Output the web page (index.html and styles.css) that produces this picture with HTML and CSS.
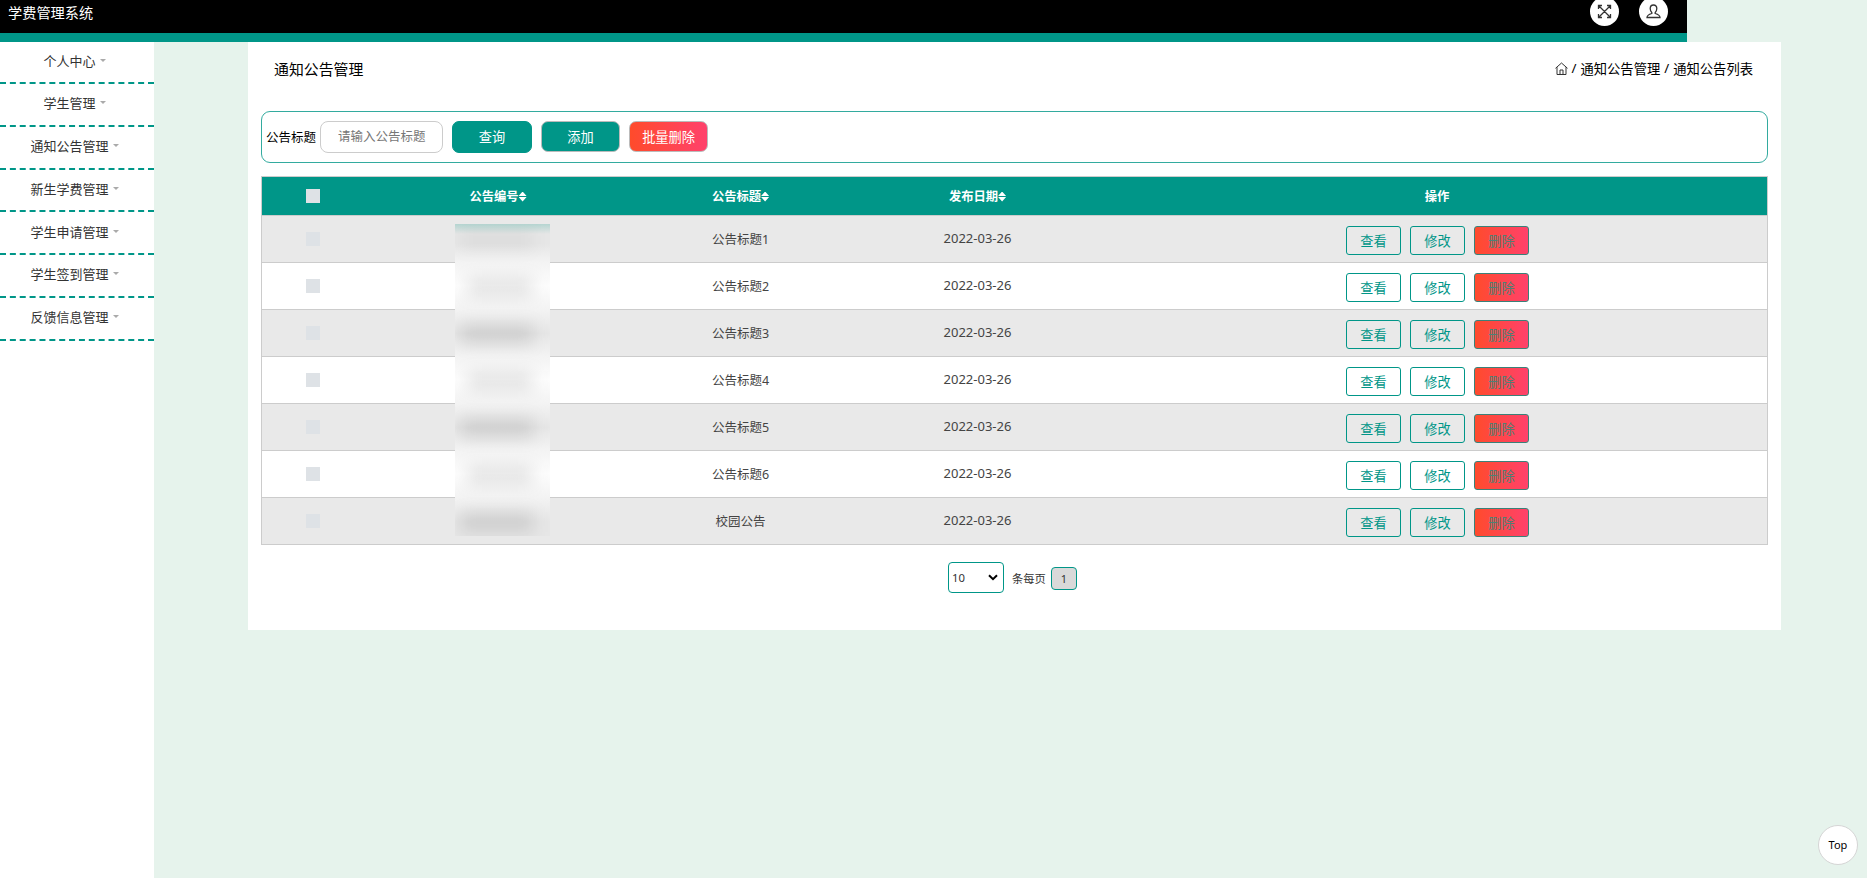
FILE: index.html
```html
<!DOCTYPE html>
<html lang="zh-CN">
<head>
    <meta charset="UTF-8">
    <meta name="viewport" content="width=device-width, initial-scale=1.0">
    <title>学费管理系统</title>
    <link rel="stylesheet" href="styles.css">
</head>
<body>
    <header class="navbar">
        <div class="brand">学费管理系统</div>
        <div class="nav-icons">
            <a class="nav-icon">
                <svg width="15" height="15" viewBox="0 0 15 15"><path d="M2 2l11 11M13 2L2 13M1.500 5V1.500H5M10 1.500h3.500V5M13.500 10v3.500H10M5 13.500H1.500V10"/></svg>
            </a>
            <a class="nav-icon">
                <svg width="15" height="15" viewBox="0 0 15 15"><path d="M7.500 1c-2.200 0-3.300 1.500-3.300 3.600 0 1.600.6 3 1.600 3.900v1C3 10.300 1 11 1 13.500h13c0-2.500-2-3.200-4.800-4v-1c1-.9 1.600-2.300 1.600-3.900C10.800 2.500 9.700 1 7.500 1z"/></svg>
            </a>
        </div>
    </header>

    <div class="wrapper">
        <nav class="sidebar">
            <a class="menu-item">个人中心<i class="caret"></i></a>
            <a class="menu-item">学生管理<i class="caret"></i></a>
            <a class="menu-item">通知公告管理<i class="caret"></i></a>
            <a class="menu-item">新生学费管理<i class="caret"></i></a>
            <a class="menu-item">学生申请管理<i class="caret"></i></a>
            <a class="menu-item">学生签到管理<i class="caret"></i></a>
            <a class="menu-item">反馈信息管理<i class="caret"></i></a>
        </nav>

        <main class="content">
            <div class="page-head">
                <h3>通知公告管理</h3>
                <div class="breadcrumb">
                    <svg class="home" width="13" height="13" viewBox="0 0 13 13"><path d="M.5 6.300L6.500 1l6 5.300M2 5.200v7.300h9V5.200M5 12.500V8h3v4.500"/></svg>
                    <span>/</span><span>通知公告管理</span><span>/</span><span>通知公告列表</span>
                </div>
            </div>

            <div class="search">
                <label for="title">公告标题</label>
                <input type="text" id="title" placeholder="请输入公告标题">
                <button class="btn btn-search">查询</button>
                <button class="btn btn-add">添加</button>
                <button class="btn btn-remove">批量删除</button>
            </div>

            <div class="table-box">
                <table>
                    <colgroup>
                        <col class="col-check"><col class="col-no"><col class="col-title"><col class="col-date"><col>
                    </colgroup>
                    <thead>
                        <tr>
                            <th><i class="check"></i></th>
                            <th>公告编号<i class="sort"></i></th>
                            <th>公告标题<i class="sort"></i></th>
                            <th>发布日期<i class="sort"></i></th>
                            <th>操作</th>
                        </tr>
                    </thead>
                    <tbody id="data-table"></tbody>
                </table>
                <div class="mask">
                    <i></i><i></i><i></i><i></i><i></i><i></i><i></i>
                </div>
            </div>

            <div class="pager">
                <div class="page-size">10<svg width="10" height="7" viewBox="0 0 10 7"><path d="M1 1.200l4 4 4-4"/></svg></div>
                <span>条每页</span>
                <button class="page-no">1</button>
            </div>
        </main>
    </div>

    <a class="to-top">Top</a>

    <script>
        const list = ["公告标题1", "公告标题2", "公告标题3", "公告标题4", "公告标题5", "公告标题6", "校园公告"];
        const table = document.getElementById("data-table");

        list.forEach((title) => {
            table.innerHTML += `
                <tr>
                    <td><i class="check"></i></td>
                    <td></td>
                    <td class="text">${title}</td>
                    <td class="text date">2022-03-26</td>
                    <td>
                        <div class="actions">
                            <button>查看</button>
                            <button>修改</button>
                            <button class="del">删除</button>
                        </div>
                    </td>
                </tr>
            `;
        });
    </script>
</body>
</html>
```
FILE: styles.css
```css
* {
    box-sizing: border-box;
}
body {
    margin: 0;
    height: 878px;
    overflow: hidden;
    background: #e6f3ec;
    font-family: "Noto Sans", "Noto Sans CJK SC", sans-serif;
    font-size: 13px;
    color: #000;
    display: flex;
    flex-direction: column;
}
button, input {
    font-family: inherit;
    padding: 0;
}
svg path {
    fill: none;
    stroke: #333;
}
.navbar {
    width: 1687px;
    height: 42px;
    flex: none;
    background: #000;
    border-bottom: 9px solid #009688;
    padding: 0 19px 0 8px;
    display: flex;
    justify-content: space-between;
}
.brand {
    color: #fff;
    font-size: 14.200px;
    line-height: 26px;
}
.nav-icons {
    display: flex;
    gap: 20px;
    margin-top: -3px;
}
.nav-icon {
    width: 29px;
    height: 29px;
    border-radius: 50%;
    background: #fff;
    display: flex;
    align-items: center;
    justify-content: center;
}
.nav-icon path {
    stroke-width: 1.300;
}
.wrapper {
    flex: 1;
    display: flex;
    align-items: flex-start;
}
.sidebar {
    width: 154px;
    height: 100%;
    background: #fff;
}
.menu-item {
    height: 42.750px;
    padding: 0 5px 3px 0;
    border-bottom: 2px dashed #009688;
    color: #333;
    display: flex;
    align-items: center;
    justify-content: center;
}
.menu-item:first-child {
    height: 42px;
}
.caret {
    margin-left: 4px;
    border: 3.500px solid transparent;
    border-top-color: #aaa;
    border-bottom: 0;
}
.content {
    width: 1533px;
    height: 588px;
    margin-left: 94px;
    padding: 0 13px;
    background: #fff;
}
.page-head {
    height: 69px;
    padding: 0 15px 17px 13px;
    display: flex;
    align-items: center;
    justify-content: space-between;
}
h3 {
    margin: 0;
    font-size: 14.900px;
    font-weight: normal;
}
.breadcrumb {
    display: flex;
    align-items: center;
    gap: 4px;
    font-size: 13.300px;
}
.search {
    height: 52px;
    border: 1px solid #33ab9f;
    border-radius: 9px;
    padding: 0 4px 1px;
    display: flex;
    align-items: center;
}
.search label {
    width: 54px;
    font-size: 12.500px;
}
.search input {
    width: 123px;
    height: 32px;
    margin-right: 9px;
    padding-left: 17px;
    border: 1px solid #ccc;
    border-radius: 8px;
    font-size: 12.500px;
}
.search input::placeholder {
    color: #777;
}
.btn {
    width: 79px;
    height: 31px;
    margin-right: 9px;
    padding-bottom: 1px;
    border: 1px solid #bbb;
    border-radius: 7px;
    background: #009688;
    color: #fff;
    font-size: 13.200px;
}
.btn-search {
    width: 80px;
    height: 32px;
    border-color: #009688;
}
.btn-remove {
    background: linear-gradient(90deg, #ff4b2b, #ff416c);
}
.table-box {
    position: relative;
    margin-top: 13px;
}
table {
    width: 1507px;
    table-layout: fixed;
    border-collapse: separate;
    border-spacing: 0;
    border: 1px solid #ccc;
    border-bottom: 0;
}
.col-check {
    width: 101px;
}
.col-no {
    width: 270px;
}
.col-title {
    width: 215px;
}
.col-date {
    width: 259px;
}
th, td {
    padding: 0;
    text-align: center;
    border-bottom: 1px solid #ccc;
    font-size: 12.500px;
}
th {
    height: 39px;
    padding-bottom: 1px;
    background: #009688;
    color: #fff;
    font-size: 12.300px;
}
td {
    height: 47px;
    color: #444;
}
.text {
    padding-bottom: 2px;
}
.date {
    font-size: 13px;
}
tbody tr:nth-child(odd) {
    background: #e9e9e9;
}
.check {
    display: block;
    width: 14px;
    height: 14px;
    margin: 0 auto;
    background: #dee2e6;
}
.sort {
    display: inline-block;
    width: 8px;
    height: 10px;
    vertical-align: -1px;
    background: #fff;
    clip-path: polygon(50% 0, 100% 45%, 0 45%, 0 55%, 100% 55%, 50% 100%, 0 55%, 0 45%);
}
.actions {
    display: flex;
    justify-content: center;
    gap: 9px;
    padding: 3px 0 0 1px;
}
.actions button {
    width: 55px;
    height: 29px;
    padding-bottom: 1px;
    border: 1px solid #009688;
    border-radius: 3px;
    background: none;
    color: #009688;
    font-size: 13.200px;
}
.actions .del {
    background: linear-gradient(90deg, #ff4b2b, #ff416c) border-box;
    border-color: #3b8078;
    color: #4d8076;
}
/* blurred strip over the number column */
.mask {
    position: absolute;
    left: 194px;
    top: 48px;
    width: 95px;
    height: 312px;
    overflow: hidden;
    padding-top: 6px;
    background:
        linear-gradient(180deg, #b5d5d1, rgba(220, 228, 227, 0) 10px),
        linear-gradient(180deg, #e6e6e6 20px, #f3f3f3 38px, #fdfdfd 62px, #f3f3f3 85px, #e6e6e6 109px, #f3f3f3 132px, #fdfdfd 156px, #f3f3f3 179px, #e6e6e6 203px, #f3f3f3 226px, #fdfdfd 250px, #f3f3f3 273px, #e6e6e6 297px);
}
.mask i {
    display: block;
    width: 66px;
    height: 20px;
    margin: 0 0 27px 12px;
    background: rgba(0, 0, 0, .09);
    filter: blur(8px);
}
.mask i:nth-child(odd) {
    width: 72px;
    margin-left: 6px;
    background: rgba(0, 0, 0, .1);
}
.mask i:first-child {
    background: rgba(0, 0, 0, .04);
}
.pager {
    margin-top: 17px;
    padding-left: 687px;
    display: flex;
    align-items: center;
    font-size: 11.300px;
    color: #333;
}
.page-size {
    width: 56px;
    height: 31px;
    margin-right: 8px;
    padding: 0 5px 0 3px;
    border: 1px solid #009688;
    border-radius: 4px;
    display: flex;
    align-items: center;
    justify-content: space-between;
}
.page-size path {
    stroke: #000;
    stroke-width: 2;
}
.page-no {
    width: 26px;
    height: 23px;
    margin: 1px 0 0 5px;
    border: 1px solid #009688;
    border-radius: 4px;
    background: #d9d9d9;
    color: #333;
    font-size: 11px;
}
.to-top {
    position: absolute;
    left: 1818px;
    top: 825px;
    width: 40px;
    height: 40px;
    border: 1px solid #d5d5d5;
    border-radius: 50%;
    background: #fff;
    font-size: 11px;
    line-height: 38px;
    text-align: center;
}
```
